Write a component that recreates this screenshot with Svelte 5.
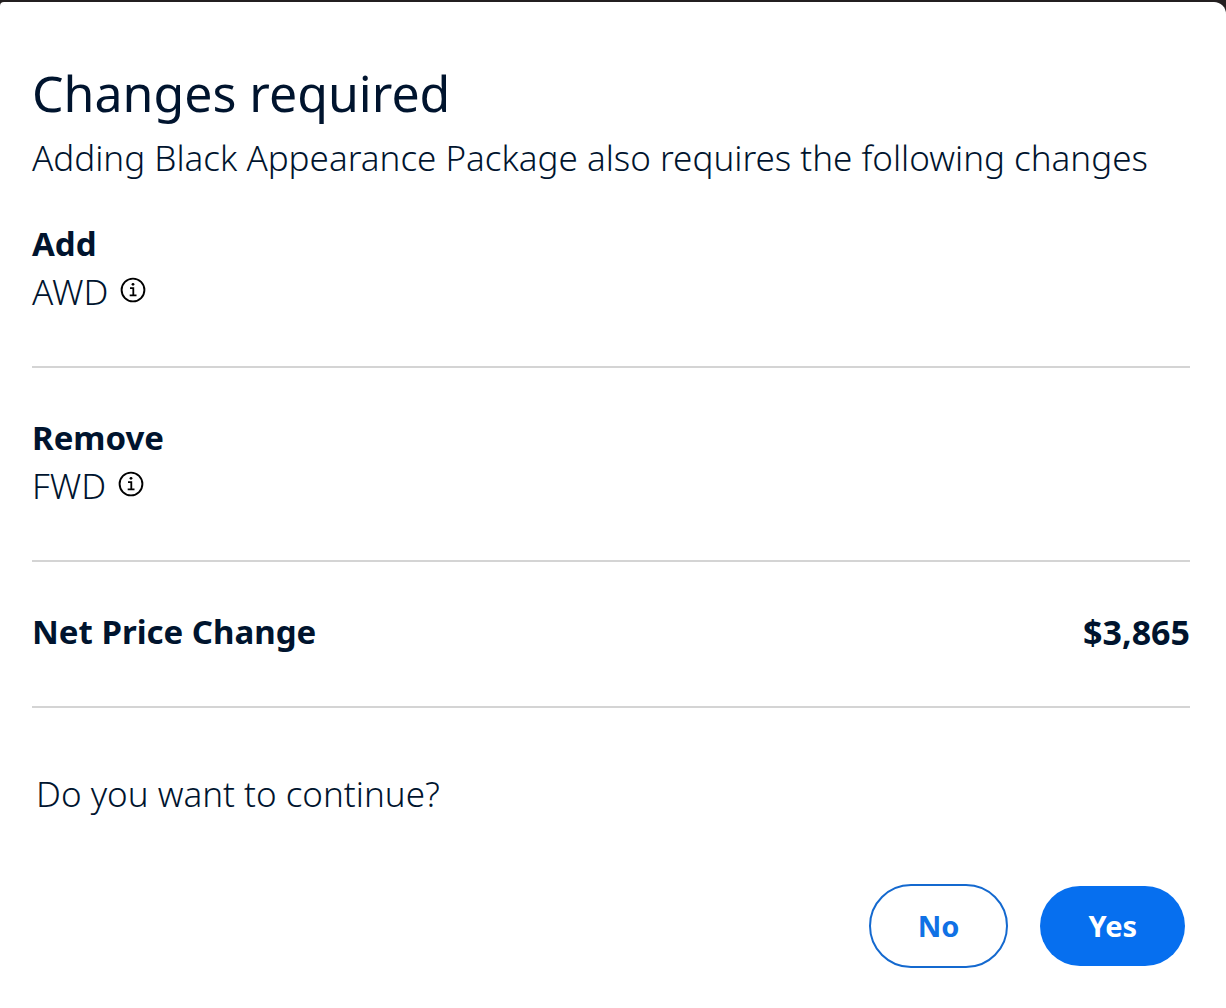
<script>
	const packageName = 'Black Appearance Package';

	const changes = [
		{ action: 'Add', item: 'AWD' },
		{ action: 'Remove', item: 'FWD' }
	];

	const netPrice = 3865;

	/** @type {string | null} */
	let answer = $state(null);

	function choose(/** @type {string} */ value) {
		answer = value;
	}
</script>

<div class="backdrop">
	<div class="dialog" role="dialog" aria-labelledby="title" data-answer={answer}>
		<h1 id="title">Changes required</h1>
		<p class="intro">Adding {packageName} also requires the following changes</p>

		{#each changes as change}
			<section>
				<h2>{change.action}</h2>
				<div class="item">
					<span>{change.item}</span>
					<button class="info" aria-label="About {change.item}">
						<svg viewBox="0 0 26 26" width="26" height="26" fill="none" stroke="#000">
							<circle cx="13" cy="13" r="11.4" stroke-width="1.9" />
							<circle cx="13" cy="7.3" r="1.4" fill="#000" stroke="none" />
							<path d="M10 11.2h3.3v6.9M9.7 18.3h6.8" stroke-width="1.8" />
						</svg>
					</button>
				</div>
			</section>
		{/each}

		<section class="price">
			<h2>Net Price Change</h2>
			<strong>${netPrice.toLocaleString('en-US')}</strong>
		</section>

		<p class="question">Do you want to continue?</p>

		<div class="actions">
			<button class="no" onclick={() => choose('no')}>No</button>
			<button class="yes" onclick={() => choose('yes')}>Yes</button>
		</div>
	</div>
</div>

<style>
	:global(body) {
		margin: 0;
		background: #fff;
	}
	.backdrop {
		background: #231f20;
		padding-top: 2px;
	}
	.dialog {
		background: #fff;
		border-radius: 4px 12px 0 0;
		padding: 59px 36px 40px 32px;
		font-family: 'Noto Sans', 'Open Sans', sans-serif;
		font-size: 35px;
		font-weight: 300;
		line-height: 48px;
		color: #00142e;
	}
	h1 {
		margin: 0 0 9px;
		font-size: 50px;
		font-weight: 400;
		line-height: 64px;
	}
	h2 {
		margin: 0;
		font-size: 33px;
		font-weight: 700;
	}
	strong {
		font-size: 34px;
		font-weight: 700;
	}
	p {
		margin: 0;
	}
	section {
		padding: 46px 0 50px;
		border-bottom: 2px solid #d4d4d4;
	}
	.intro + section {
		padding-top: 38px;
	}
	.item {
		display: flex;
		align-items: center;
		gap: 12px;
	}
	.info {
		display: flex;
		padding: 0 0 4px;
		border: 0;
		background: none;
		cursor: pointer;
	}
	.price {
		display: flex;
		justify-content: space-between;
	}
	.question {
		padding: 62px 4px 0;
	}
	.actions {
		display: flex;
		justify-content: flex-end;
		align-items: center;
		gap: 32px;
		padding: 66px 5px 0 0;
	}
	.actions button {
		box-sizing: border-box;
		padding: 0 48px 2px;
		border-radius: 42px;
		font-family: inherit;
		font-size: 29px;
		font-weight: 700;
		cursor: pointer;
	}
	.actions .no {
		height: 84px;
		padding: 0 47px 2px;
		border: 2px solid #1469cf;
		background: #fff;
		color: #1071e5;
	}
	.yes {
		height: 80px;
		border: 0;
		background: #066fef;
		color: #fff;
	}
</style>
